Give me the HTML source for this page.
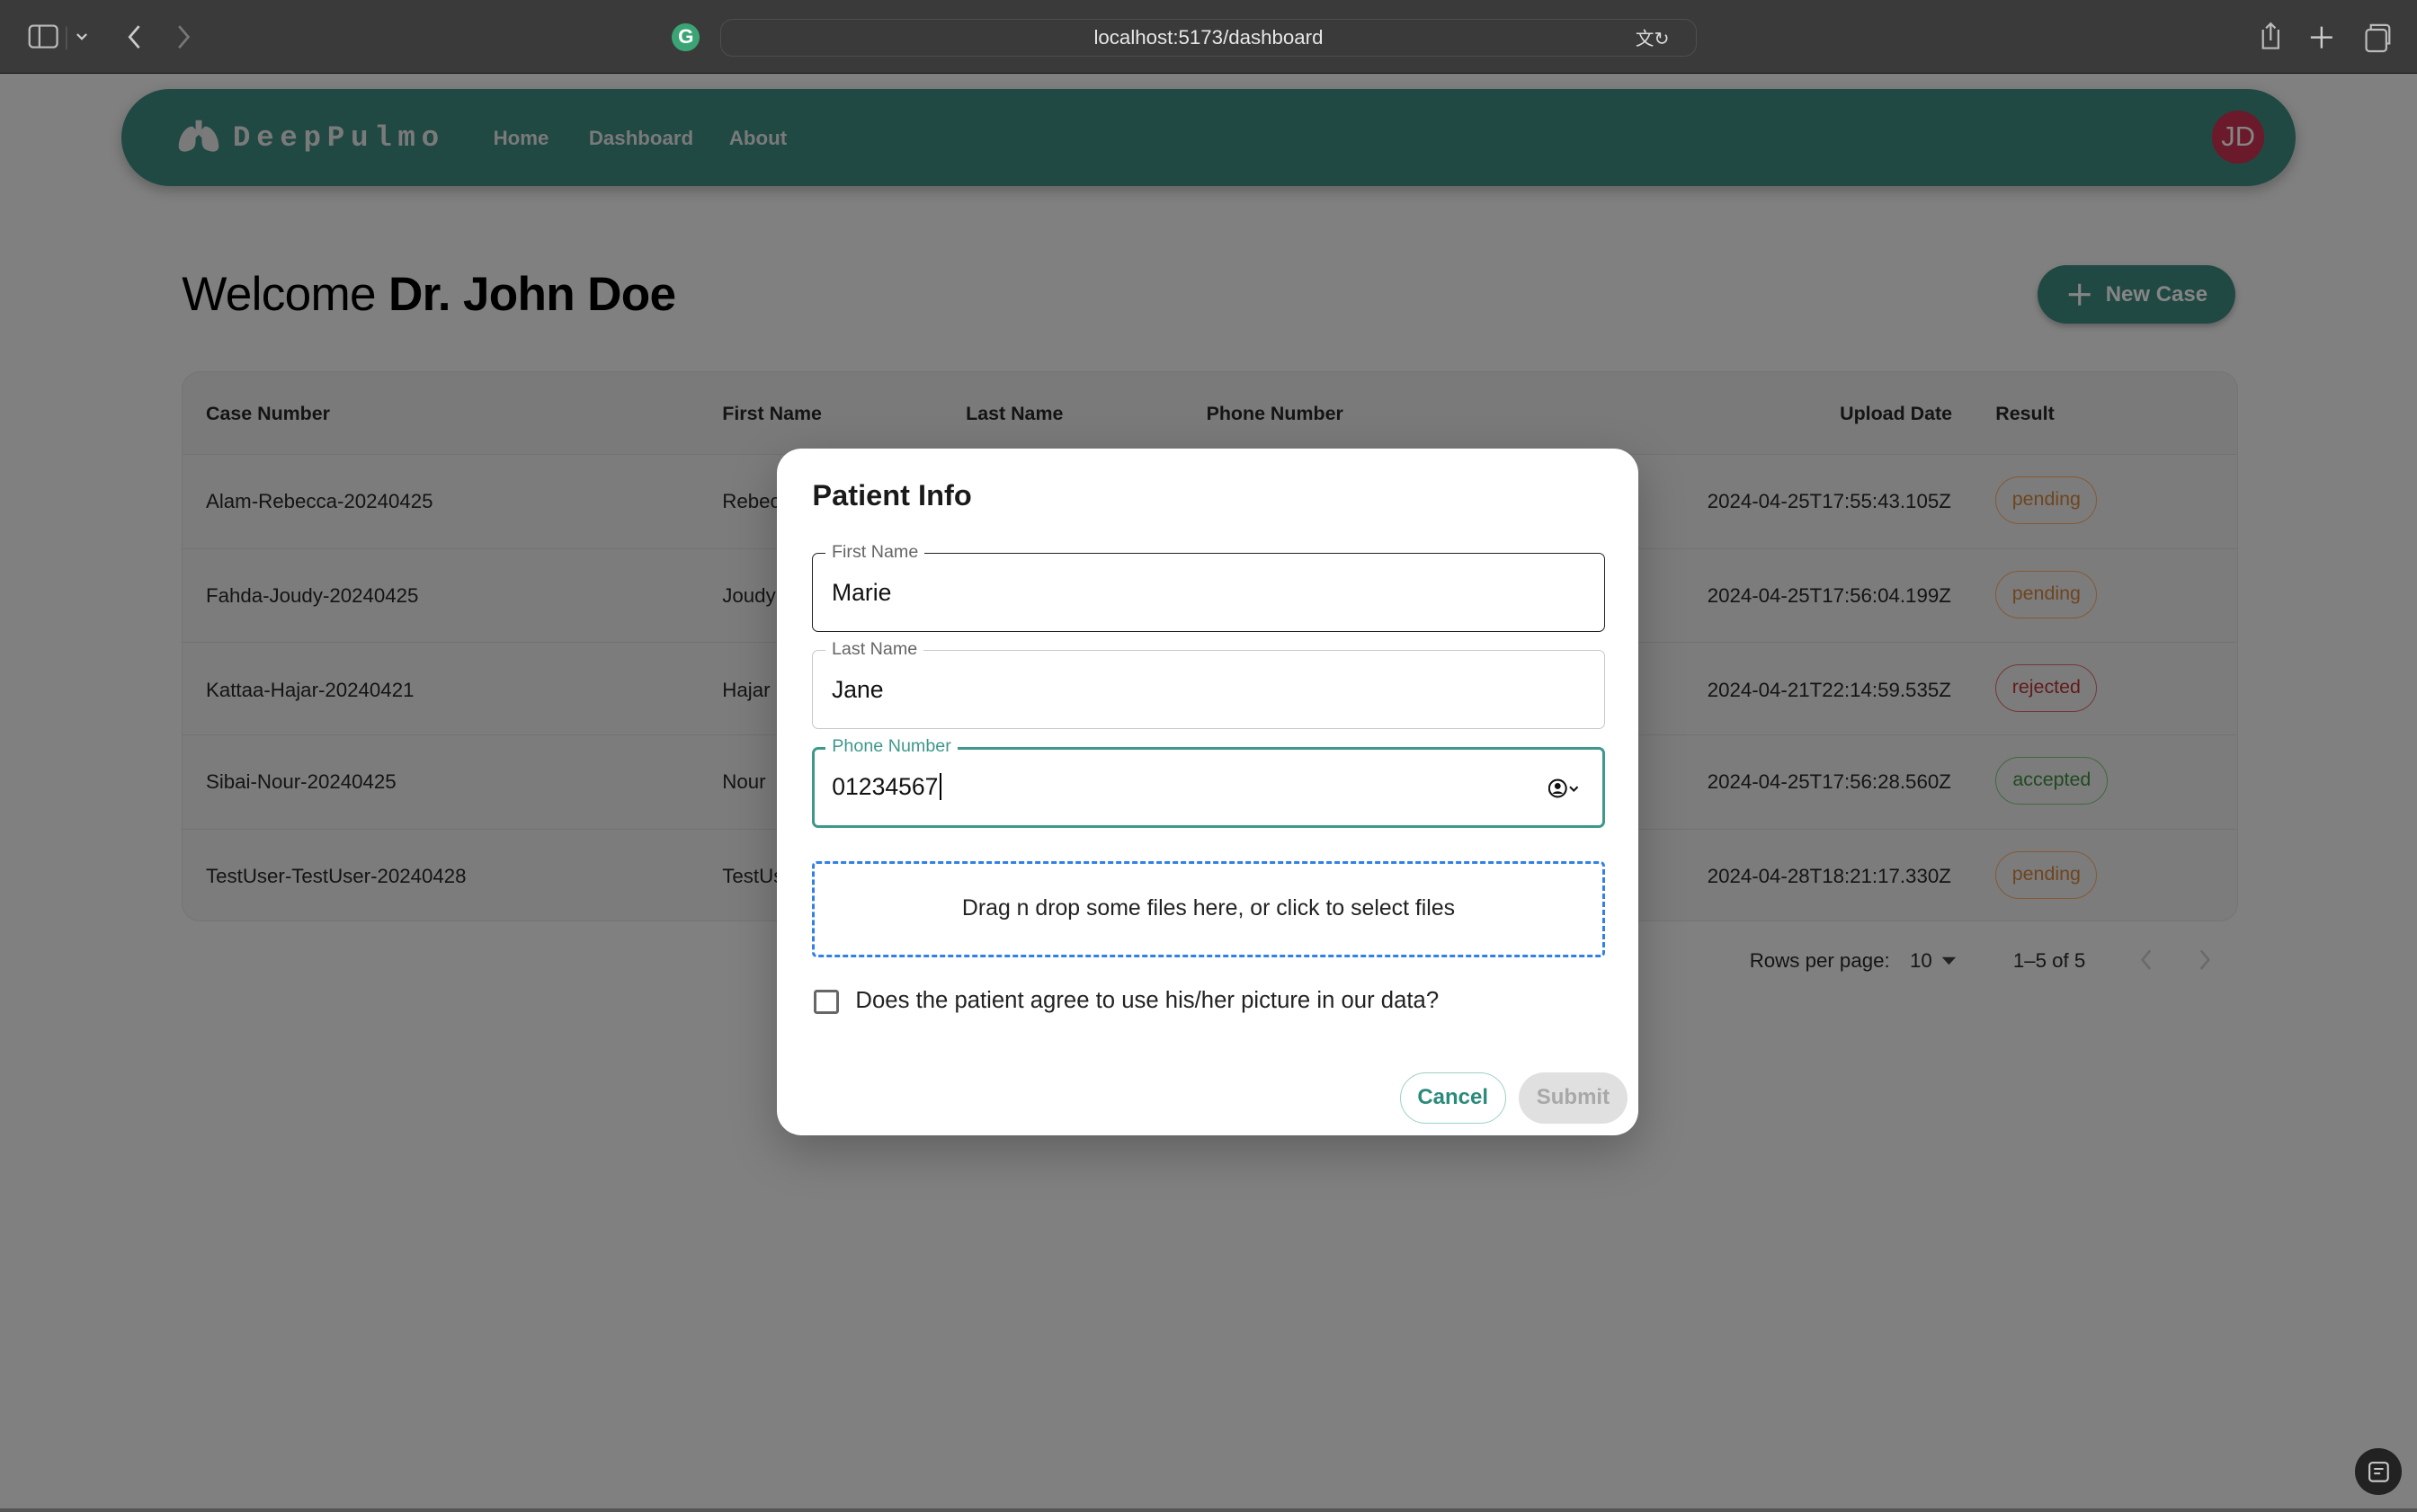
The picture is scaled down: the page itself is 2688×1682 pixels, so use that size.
<!DOCTYPE html>
<html><head><meta charset="utf-8"><style>
html{zoom:1.714286}
*{box-sizing:border-box;margin:0;padding:0}
body{width:1568px;height:981px;overflow:hidden;background:#808080;font-family:"Liberation Sans",sans-serif;position:relative;color:#111}
.abs{position:absolute}
.chrome{left:0;top:0;width:1568px;height:48px;background:#3a3a3a;border-bottom:1px solid #111}
.url{left:467px;top:12px;width:634px;height:25px;border:1px solid #4e4e4e;border-radius:8px;color:#e6e6e6;font-size:13px;text-align:center;line-height:23px}
.nav{left:79px;top:58px;width:1410px;height:63px;background:#204943;border-radius:32px;box-shadow:0 3px 8px rgba(0,0,0,.25)}
.navlink{top:82px;font-size:13px;color:#7a7a7a;font-weight:bold}
.logo{left:151px;top:79px;font-family:"Liberation Mono",monospace;font-weight:bold;font-size:19px;letter-spacing:3.9px;color:#7a7a7a}
.av{left:1435px;top:72px;width:34px;height:34px;border-radius:50%;background:#6a1a2a;color:#858585;font-size:18px;text-align:center;line-height:34px}
.title{left:118px;top:173px;font-size:31px;color:#000;letter-spacing:-0.4px}
.newc{left:1322px;top:172px;width:128px;height:38px;border-radius:19px;background:#204943;color:#858585;font-size:14px;font-weight:bold;line-height:38px;padding-left:44px;box-shadow:0 2px 4px rgba(0,0,0,.25)}
.table{left:118px;top:241px;width:1334px;height:357px;border:1px solid #747474;border-radius:12px;background:#7c7c7c;overflow:hidden}
.row{position:absolute;left:0;width:1334px;border-top:1px solid #727272;font-size:13px;color:#141414}
.row span{position:absolute}
.hd span{font-weight:bold;font-size:12.5px}
.chip{position:absolute;height:31px;border-radius:16px;border:1px solid;font-size:12.5px;line-height:29px;text-align:center}
.p{color:#6e4520;border-color:#845a34;width:66px}
.r{color:#621a1a;border-color:#743838;width:66px}
.a{color:#1f4a1f;border-color:#3d6a3d;width:73px}
.pag{top:616px;font-size:13px;color:#141414}
.modal{left:504px;top:291px;width:559px;height:446px;background:#fff;border-radius:16px;box-shadow:0 10px 30px rgba(0,0,0,.25)}
.field{position:absolute;left:23px;width:514px;height:51px;border-radius:4px}
.field .lab{position:absolute;left:8px;top:-8px;background:#fff;padding:0 4px;font-size:11.5px;color:#666}
.field .val{position:absolute;left:12px;top:16px;font-size:15.5px;color:#111}
</style></head><body>
<div class="abs chrome"></div>
<svg class="abs" style="left:18px;top:15px" width="60" height="18" viewBox="0 0 60 18"><rect x="1" y="1.5" width="18" height="14" rx="2.5" fill="none" stroke="#bbb" stroke-width="1.3"/><line x1="7.5" y1="2" x2="7.5" y2="15.5" stroke="#bbb" stroke-width="1.3"/><line x1="25" y1="2" x2="25" y2="17" stroke="#555"/><path d="M32 7l3 3 3-3" fill="none" stroke="#ccc" stroke-width="1.3"/></svg>
<svg class="abs" style="left:78px;top:14px" width="50" height="20"><path d="M12 3l-6 7 6 7" fill="none" stroke="#ccc" stroke-width="1.6"/><path d="M38 3l6 7-6 7" fill="none" stroke="#777" stroke-width="1.6"/></svg>
<div class="abs" style="left:436px;top:15px;width:18px;height:18px;border-radius:50%;background:#3aa474;color:#fff;font-size:13px;font-weight:bold;text-align:center;line-height:18px">G</div>
<div class="abs url">localhost:5173/dashboard</div>
<div class="abs" style="left:1061px;top:15px;color:#ddd;font-size:12px">文↻</div>
<svg class="abs" style="left:1460px;top:12px" width="95" height="24"><path d="M8 7v12h10V7M13 3v11M10 6l3-3 3 3" fill="none" stroke="#bbb" stroke-width="1.3"/><path d="M46 5v14M39 12h14" stroke="#ccc" stroke-width="1.4"/><rect x="75" y="7" width="13" height="14" rx="2" fill="none" stroke="#bbb" stroke-width="1.3"/><path d="M78 7V4h10a2 2 0 0 1 2 2v10h-2" fill="none" stroke="#bbb" stroke-width="1.3"/></svg>

<div class="abs nav"></div>
<svg class="abs" style="left:115px;top:77px" width="28" height="22" viewBox="0 0 28 22"><path d="M13 1v9l-4 4M15 1v9l4 4" stroke="#7a7a7a" stroke-width="2" fill="none"/><path d="M10 5C5 5 1 12 1 18c0 3 3 4 6 3 4-1 5-3 5-7V7z M18 5c5 0 9 7 9 13 0 3-3 4-6 3-4-1-5-3-5-7V7z" fill="#7a7a7a"/></svg>
<div class="abs logo">DeepPulmo</div>
<div class="abs navlink" style="left:320px">Home</div>
<div class="abs navlink" style="left:382px">Dashboard</div>
<div class="abs navlink" style="left:473px">About</div>
<div class="abs av">JD</div>

<div class="abs title">Welcome <b>Dr. John Doe</b></div>
<div class="abs newc">New Case</div>
<svg class="abs" style="left:1341px;top:183px" width="16" height="16"><path d="M8 1v14M1 8h14" stroke="#858585" stroke-width="1.8"/></svg>

<div class="abs table">
<div class="row hd" style="top:0;height:53px;border-top:none;background:#7a7a7a"><span style="left:15px;top:20px">Case Number</span><span style="left:350px;top:20px">First Name</span><span style="left:508px;top:20px">Last Name</span><span style="left:664px;top:20px">Phone Number</span><span style="left:1075px;top:20px">Upload Date</span><span style="left:1176px;top:20px">Result</span></div>
<div class="row" style="top:53px;height:61px"><span style="left:15px;top:23px">Alam-Rebecca-20240425</span><span style="left:350px;top:23px">Rebecca</span><span style="left:989px;top:23px">2024-04-25T17:55:43.105Z</span><div class="chip p" style="left:1176px;top:14px">pending</div></div>
<div class="row" style="top:114px;height:61px"><span style="left:15px;top:23px">Fahda-Joudy-20240425</span><span style="left:350px;top:23px">Joudy</span><span style="left:989px;top:23px">2024-04-25T17:56:04.199Z</span><div class="chip p" style="left:1176px;top:14px">pending</div></div>
<div class="row" style="top:175px;height:60px"><span style="left:15px;top:23px">Kattaa-Hajar-20240421</span><span style="left:350px;top:23px">Hajar</span><span style="left:989px;top:23px">2024-04-21T22:14:59.535Z</span><div class="chip r" style="left:1176px;top:14px">rejected</div></div>
<div class="row" style="top:235px;height:61px"><span style="left:15px;top:23px">Sibai-Nour-20240425</span><span style="left:350px;top:23px">Nour</span><span style="left:989px;top:23px">2024-04-25T17:56:28.560Z</span><div class="chip a" style="left:1176px;top:14px">accepted</div></div>
<div class="row" style="top:296px;height:61px"><span style="left:15px;top:23px">TestUser-TestUser-20240428</span><span style="left:350px;top:23px">TestUser</span><span style="left:989px;top:23px">2024-04-28T18:21:17.330Z</span><div class="chip p" style="left:1176px;top:14px">pending</div></div>
</div>
<div class="abs pag" style="left:1135px">Rows per page:</div>
<div class="abs pag" style="left:1239px">10</div>
<svg class="abs" style="left:1259px;top:620px" width="12" height="8"><path d="M1 1h9L5.5 6z" fill="#222"/></svg>
<div class="abs pag" style="left:1306px">1–5 of 5</div>
<svg class="abs" style="left:1385px;top:615px" width="55" height="16"><path d="M10 2L5 8l5 6" fill="none" stroke="#6a6a6a" stroke-width="1.5"/><path d="M43 2l5 6-5 6" fill="none" stroke="#6a6a6a" stroke-width="1.5"/></svg>

<div class="abs modal">
<div class="abs" style="left:23px;top:20px;font-size:19px;font-weight:bold;color:#1a1a1a">Patient Info</div>
<div class="field" style="top:68px;border:1px solid #222"><div class="lab">First Name</div><div class="val">Marie</div></div>
<div class="field" style="top:131px;border:1px solid #c8c8c8"><div class="lab">Last Name</div><div class="val" style="left:12px">Jane</div></div>
<div class="field" style="top:194px;height:52px;border:2px solid #3f988c"><div class="lab" style="color:#3f988c;left:7px;top:-9px">Phone Number</div><div class="val" style="left:11px;top:15px">01234567<span style="border-left:1.5px solid #000;margin-left:1px"></span></div>
<svg style="position:absolute;left:476px;top:18px" width="24" height="14"><circle cx="6" cy="7" r="5.5" fill="none" stroke="#111" stroke-width="1.2"/><circle cx="6" cy="5.5" r="2" fill="#111"/><path d="M2.5 10.5a4 3 0 0 1 7 0" fill="#111"/><path d="M14 6l2.5 2.5L19 6" fill="none" stroke="#111" stroke-width="1.2"/></svg></div>
<div class="abs" style="left:23px;top:268px;width:514px;height:62px;border:2px dashed #3080e8;border-radius:3px;text-align:center;line-height:58px;font-size:14.5px;color:#222">Drag n drop some files here, or click to select files</div>
<div class="abs" style="left:24px;top:351px;width:16px;height:16px;border:2px solid #666;border-radius:2px"></div>
<div class="abs" style="left:51px;top:350px;font-size:15px;color:#222">Does the patient agree to use his/her picture in our data?</div>
<div class="abs" style="left:404px;top:405px;width:69px;height:33px;border:1px solid #9fcfc7;border-radius:17px;text-align:center;line-height:31px;color:#2b8a7c;font-size:14px;font-weight:bold">Cancel</div>
<div class="abs" style="left:481px;top:405px;width:71px;height:33px;background:#e0e0e0;border-radius:17px;text-align:center;line-height:33px;color:#a8a8a8;font-size:14px;font-weight:bold">Submit</div>
</div>

<div class="abs" style="left:1528px;top:940px;width:30px;height:30px;border-radius:50%;background:#222"></div>
<svg class="abs" style="left:1534px;top:946px" width="18" height="18"><rect x="3" y="3" width="12" height="12" rx="2" fill="none" stroke="#ccc" stroke-width="1.2"/><path d="M6 7h6M6 10h4" stroke="#ccc" stroke-width="1.2"/></svg>
<div class="abs" style="left:0;top:979px;width:1568px;height:2px;background:#555"></div>
</body></html>
